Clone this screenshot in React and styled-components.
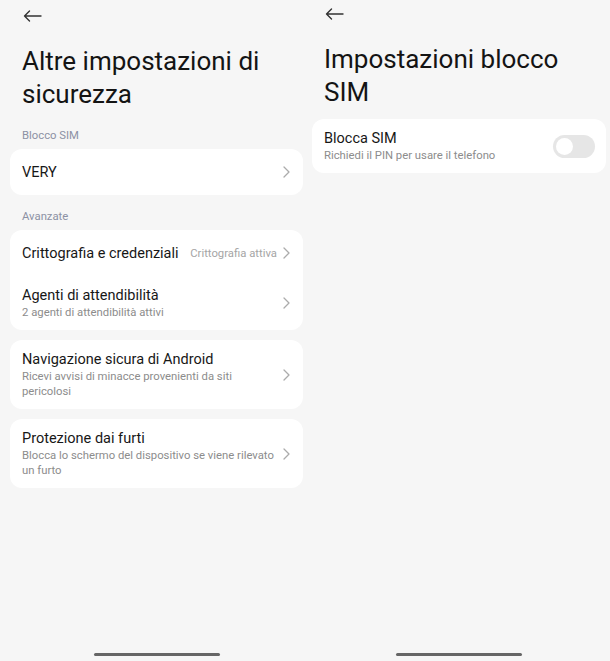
import React from 'react';
import styled, { createGlobalStyle } from 'styled-components';

const GlobalStyle = createGlobalStyle`
  html, body {
    margin: 0;
    padding: 0;
    background: #f6f6f6;
  }
  body {
    font-family: Roboto, "Noto Sans", sans-serif;
    color: #151515;
  }
`;

const BackArrow = () => (
  <svg width="19" height="12" viewBox="0 0 19 12" fill="none">
    <path
      d="M18 6H1.5M6.5 1L1.5 6l5 5"
      stroke="#333"
      strokeWidth="1.4"
      strokeLinecap="round"
      strokeLinejoin="round"
    />
  </svg>
);

const Chevron = () => (
  <svg width="7" height="12" viewBox="0 0 7 12" fill="none">
    <path
      d="M1 1l5 5-5 5"
      stroke="#ababab"
      strokeWidth="1.3"
      strokeLinecap="round"
      strokeLinejoin="round"
    />
  </svg>
);

const sections = [
  {
    label: 'Blocco SIM',
    top: '18px',
    cards: [[{ title: 'VERY' }]],
  },
  {
    label: 'Avanzate',
    top: '15px',
    cards: [
      [
        { title: 'Crittografia e credenziali', value: 'Crittografia attiva' },
        { title: 'Agenti di attendibilità', sub: '2 agenti di attendibilità attivi' },
      ],
      [
        {
          title: 'Navigazione sicura di Android',
          sub: 'Ricevi avvisi di minacce provenienti da siti pericolosi',
        },
      ],
      [
        {
          title: 'Protezione dai furti',
          sub: 'Blocca lo schermo del dispositivo se viene rilevato un furto',
        },
      ],
    ],
  },
];

const Row = ({ item }) => (
  <Item>
    <Texts>
      <Title>{item.title}</Title>
      {item.sub && <Sub>{item.sub}</Sub>}
    </Texts>
    {item.value && <Value>{item.value}</Value>}
    {item.toggle ? (
      <Toggle>
        <Knob />
      </Toggle>
    ) : (
      <Chevron />
    )}
  </Item>
);

const App = () => {
  return (
    <Page>
      <GlobalStyle />
      <Screen $left="10px" $right="2px">
        <Back $top="10px">
          <BackArrow />
        </Back>
        <Heading>
          Altre impostazioni di
          <br />
          sicurezza
        </Heading>
        {sections.map((s) => (
          <React.Fragment key={s.label}>
            <Label $top={s.top}>{s.label}</Label>
            {s.cards.map((card, i) => (
              <Card key={i} $top={i === 0 ? '0' : '10px'}>
                {card.map((item) => (
                  <Row key={item.title} item={item} />
                ))}
              </Card>
            ))}
          </React.Fragment>
        ))}
        <HomeBar />
      </Screen>
      <Screen $left="7px" $right="4px">
        <Back $top="8px">
          <BackArrow />
        </Back>
        <Heading>
          Impostazioni blocco
          <br />
          SIM
        </Heading>
        <Card $top="10px">
          <Row
            item={{
              title: 'Blocca SIM',
              sub: 'Richiedi il PIN per usare il telefono',
              toggle: true,
            }}
          />
        </Card>
        <HomeBar />
      </Screen>
    </Page>
  );
};

export default App;

const Page = styled.div`
  display: flex;
  width: 610px;
  height: 661px;
  background: #f6f6f6;
  overflow: hidden;
`;

const Screen = styled.div`
  width: 305px;
  box-sizing: border-box;
  padding: 0 ${(p) => p.$right} 0 ${(p) => p.$left};
  display: flex;
  flex-direction: column;
`;

const Back = styled.div`
  display: flex;
  align-items: center;
  height: 12px;
  margin: ${(p) => p.$top} 0 0 13px;
`;

const Heading = styled.h1`
  margin: 23px 0 0 12px;
  font-size: 26px;
  font-weight: 400;
  line-height: 33px;
  color: #141414;
`;

const Label = styled.div`
  margin: ${(p) => p.$top} 0 6px 12px;
  font-size: 11.3px;
  color: #8c91a4;
  line-height: 14px;
`;

const Card = styled.div`
  background: #fff;
  border-radius: 12px;
  margin-top: ${(p) => p.$top};
`;

const Item = styled.div`
  display: flex;
  align-items: center;
  gap: 5px;
  box-sizing: border-box;
  min-height: 46px;
  padding: 10.5px 13px 10.5px 12px;
`;

const Texts = styled.div`
  flex: 1;
  display: flex;
  flex-direction: column;
  gap: 1px;
  min-width: 0;
`;

const Title = styled.div`
  font-size: 14.5px;
  line-height: 17px;
  color: #171717;
`;

const Sub = styled.div`
  font-size: 11.3px;
  line-height: 15px;
  color: #8c8c8c;
`;

const Value = styled.div`
  font-size: 11.3px;
  color: #a5a5a5;
  margin-right: 1px;
`;

const Toggle = styled.div`
  width: 42px;
  height: 23px;
  border-radius: 12px;
  background: #e6e6e6;
  display: flex;
  align-items: center;
  padding-left: 3px;
  box-sizing: border-box;
  margin-right: -2px;
`;

const Knob = styled.div`
  width: 17px;
  height: 17px;
  border-radius: 50%;
  background: #fff;
`;

const HomeBar = styled.div`
  margin: auto auto 5px;
  width: 126px;
  height: 3px;
  border-radius: 2px;
  background: #666;
`;
